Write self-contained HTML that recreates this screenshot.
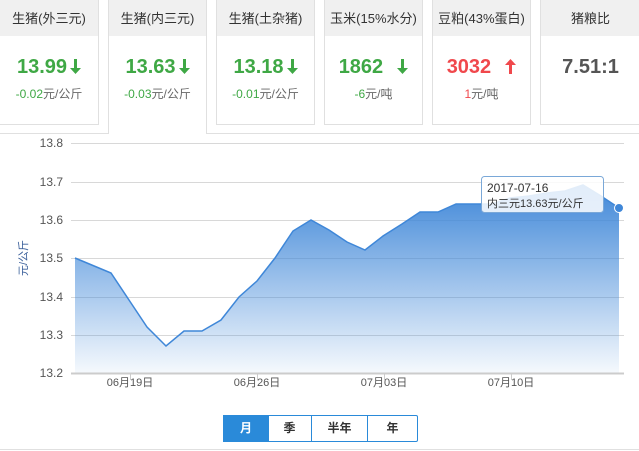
<!DOCTYPE html>
<html><head><meta charset="utf-8"><style>
body{margin:0;width:639px;height:451px;background:#fff;font-family:"Liberation Sans","Noto Sans CJK SC",sans-serif;overflow:hidden;position:relative}
.c{position:absolute;top:-1px;width:97px;height:124px;border:1px solid #e0e0e0;background:#fff;text-align:center}
.c .h{height:36px;background:#f0f0f0;line-height:38px;font-size:13px;color:#333}
.c .n{margin-top:19px;font-size:20px;font-weight:bold;line-height:24px}
.c .s{font-size:12px;margin-top:6px;color:#666}
.c .n svg{vertical-align:-1px;margin-left:3px}
.g{color:#3fa845}.r{color:#f0484c}
.act{height:134px;border-bottom:none}
.btn{position:absolute;top:415px;height:25px;line-height:25px;font-size:12px;text-align:center;color:#333;border:1px solid #2a8ad9;border-left:none;font-weight:bold}
</style></head><body>
<div class="c" style="left:-1px;width:98px"><div class="h">生猪(外三元)</div><div class="n g">13.99<svg width="11" height="15" viewBox="0 0 11 15"><path d="M4,0h3v9h4l-5.5,6L0,9h4z" fill="#3fa845"/></svg></div><div class="s"><span class="g">-0.02</span>元/公斤</div></div>
<div class="c act" style="left:108px"><div class="h">生猪(内三元)</div><div class="n g">13.63<svg width="11" height="15" viewBox="0 0 11 15"><path d="M4,0h3v9h4l-5.5,6L0,9h4z" fill="#3fa845"/></svg></div><div class="s"><span class="g">-0.03</span>元/公斤</div></div>
<div class="c" style="left:216px"><div class="h">生猪(土杂猪)</div><div class="n g">13.18<svg width="11" height="15" viewBox="0 0 11 15"><path d="M4,0h3v9h4l-5.5,6L0,9h4z" fill="#3fa845"/></svg></div><div class="s"><span class="g">-0.01</span>元/公斤</div></div>
<div class="c" style="left:324px"><div class="h">玉米(15%水分)</div><div class="n g">1862 &nbsp;<svg width="11" height="15" viewBox="0 0 11 15"><path d="M4,0h3v9h4l-5.5,6L0,9h4z" fill="#3fa845"/></svg></div><div class="s"><span class="g">-6</span>元/吨</div></div>
<div class="c" style="left:432px"><div class="h">豆粕(43%蛋白)</div><div class="n r">3032 &nbsp;<svg width="11" height="15" viewBox="0 0 11 15"><path d="M4,15h3V6h4L5.5,0L0,6h4z" fill="#f0484c"/></svg></div><div class="s"><span class="r">1</span>元/吨</div></div>
<div class="c" style="left:540px;width:99px"><div class="h">猪粮比</div><div class="n" style="color:#555">7.51:1</div></div>
<div style="position:absolute;left:0;top:133px;width:108px;height:1px;background:#e0e0e0"></div>
<div style="position:absolute;left:206px;top:133px;width:433px;height:1px;background:#e0e0e0"></div>
<svg width="639" height="451" style="position:absolute;left:0;top:0">
<defs><linearGradient id="gr" x1="0" y1="0" x2="0" y2="1"><stop offset="0" stop-color="#3f87d8"/><stop offset="1" stop-color="#3f87d8" stop-opacity="0.05"/></linearGradient></defs>
<g stroke="#d8d8d8" stroke-width="1">
<line x1="71" x2="624" y1="143.5" y2="143.5"/><line x1="71" x2="624" y1="182.5" y2="182.5"/><line x1="71" x2="624" y1="220.5" y2="220.5"/><line x1="71" x2="624" y1="258.5" y2="258.5"/><line x1="71" x2="624" y1="297.5" y2="297.5"/><line x1="71" x2="624" y1="335.5" y2="335.5"/></g>
<path d="M75,258 L111,273 L129,300 L147,327 L166,346 L184,331 L202,331 L221,320 L239,297 L257,281 L275,258 L293,231 L311,220 L329,230 L347,242 L365,250 L383,236 L402,224 L420,212 L438,212 L456,204 L474,204 L492,204 L510,198 L529,196 L547,193 L565,191 L583,185 L601,196 L619,208 L619,373 L75,373 Z" fill="url(#gr)"/>
<path d="M75,258 L111,273 L129,300 L147,327 L166,346 L184,331 L202,331 L221,320 L239,297 L257,281 L275,258 L293,231 L311,220 L329,230 L347,242 L365,250 L383,236 L402,224 L420,212 L438,212 L456,204 L474,204 L492,204 L510,198 L529,196 L547,193 L565,191 L583,185 L601,196 L619,208" fill="none" stroke="#3f87d8" stroke-width="1.5"/>
<line x1="71" x2="624" y1="373.5" y2="373.5" stroke="#ccc" stroke-width="2"/>
<g stroke="#ccc"><line x1="130.5" x2="130.5" y1="373" y2="380"/><line x1="257.5" x2="257.5" y1="373" y2="380"/><line x1="384.5" x2="384.5" y1="373" y2="380"/><line x1="511.5" x2="511.5" y1="373" y2="380"/></g>
<g font-size="12" fill="#555" text-anchor="end"><text x="63" y="147">13.8</text><text x="63" y="186">13.7</text><text x="63" y="224">13.6</text><text x="63" y="262">13.5</text><text x="63" y="301">13.4</text><text x="63" y="339">13.3</text><text x="63" y="377">13.2</text></g>
<text transform="translate(27,258) rotate(-90)" font-size="11" fill="#3a5f9a" text-anchor="middle">元/公斤</text>
<g font-size="11" fill="#555" text-anchor="middle"><text x="130" y="386">06月19日</text><text x="257" y="386">06月26日</text><text x="384" y="386">07月03日</text><text x="511" y="386">07月10日</text></g>
<rect x="481.5" y="176.5" width="122" height="36" rx="3" fill="#fff" fill-opacity="0.85" stroke="#7aa8d8"/>
<text x="487" y="192" font-size="12" fill="#333">2017-07-16</text>
<text x="487" y="207" font-size="11" fill="#333">内三元13.63元/公斤</text>
<circle cx="619" cy="208" r="4.5" fill="#3f87d8" stroke="#fff"/>
</svg>
<div class="btn" style="left:223px;width:44px;border-left:1px solid #2a8ad9;background:#2a8ad9;color:#fff">月</div>
<div class="btn" style="left:268px;width:43px">季</div>
<div class="btn" style="left:312px;width:55px">半年</div>
<div class="btn" style="left:368px;width:49px;border-radius:0 2px 2px 0">年</div>
<div style="position:absolute;left:0;top:449px;width:639px;height:1px;background:#e0e0e0"></div>
</body></html>
